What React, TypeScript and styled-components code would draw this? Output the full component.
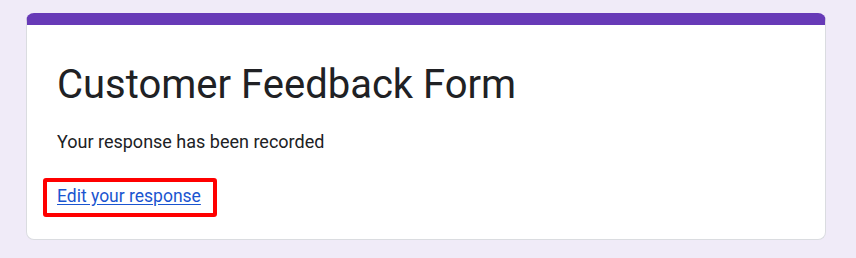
import React from "react";
import styled, { createGlobalStyle } from "styled-components";

const GlobalStyle = createGlobalStyle`
  html, body {
    margin: 0;
    padding: 0;
    background: #f0ebf8;
    font-family: Roboto, "Noto Sans", Arial, sans-serif;
  }
`;

const Page = styled.div`
  padding: 13px 0 0 26px;
  min-height: 258px;
  box-sizing: border-box;
`;

const Card = styled.section`
  width: 800px;
  box-sizing: border-box;
  background: #ffffff;
  border: 1px solid #dadce0;
  border-top: 12px solid #673ab7;
  border-radius: 8px;
  padding: 36px 30px 22px 30px;
  display: flex;
  flex-direction: column;
  align-items: flex-start;
`;

const Title = styled.h1`
  margin: 0;
  font-size: 40px;
  line-height: 48px;
  font-weight: 400;
  color: #202124;
`;

const Message = styled.p`
  margin: 21px 0 0 0;
  font-size: 18px;
  line-height: 24px;
  color: #202124;
`;

const Highlight = styled.div`
  margin: 24px 0 0 -14px;
  border: 4px solid #ff0000;
  border-radius: 3px;
  padding: 2px 12px 5px 10px;
`;

const EditLink = styled.a`
  display: block;
  font-size: 17.5px;
  line-height: 24px;
  color: #1a55d0;
  text-decoration: underline;
  text-underline-offset: 2px;
`;

export default function App() {
  return (
    <>
      <GlobalStyle />
      <Page>
        <Card>
          <Title>Customer Feedback Form</Title>
          <Message>Your response has been recorded</Message>
          <Highlight>
            <EditLink href="#">Edit your response</EditLink>
          </Highlight>
        </Card>
      </Page>
    </>
  );
}
